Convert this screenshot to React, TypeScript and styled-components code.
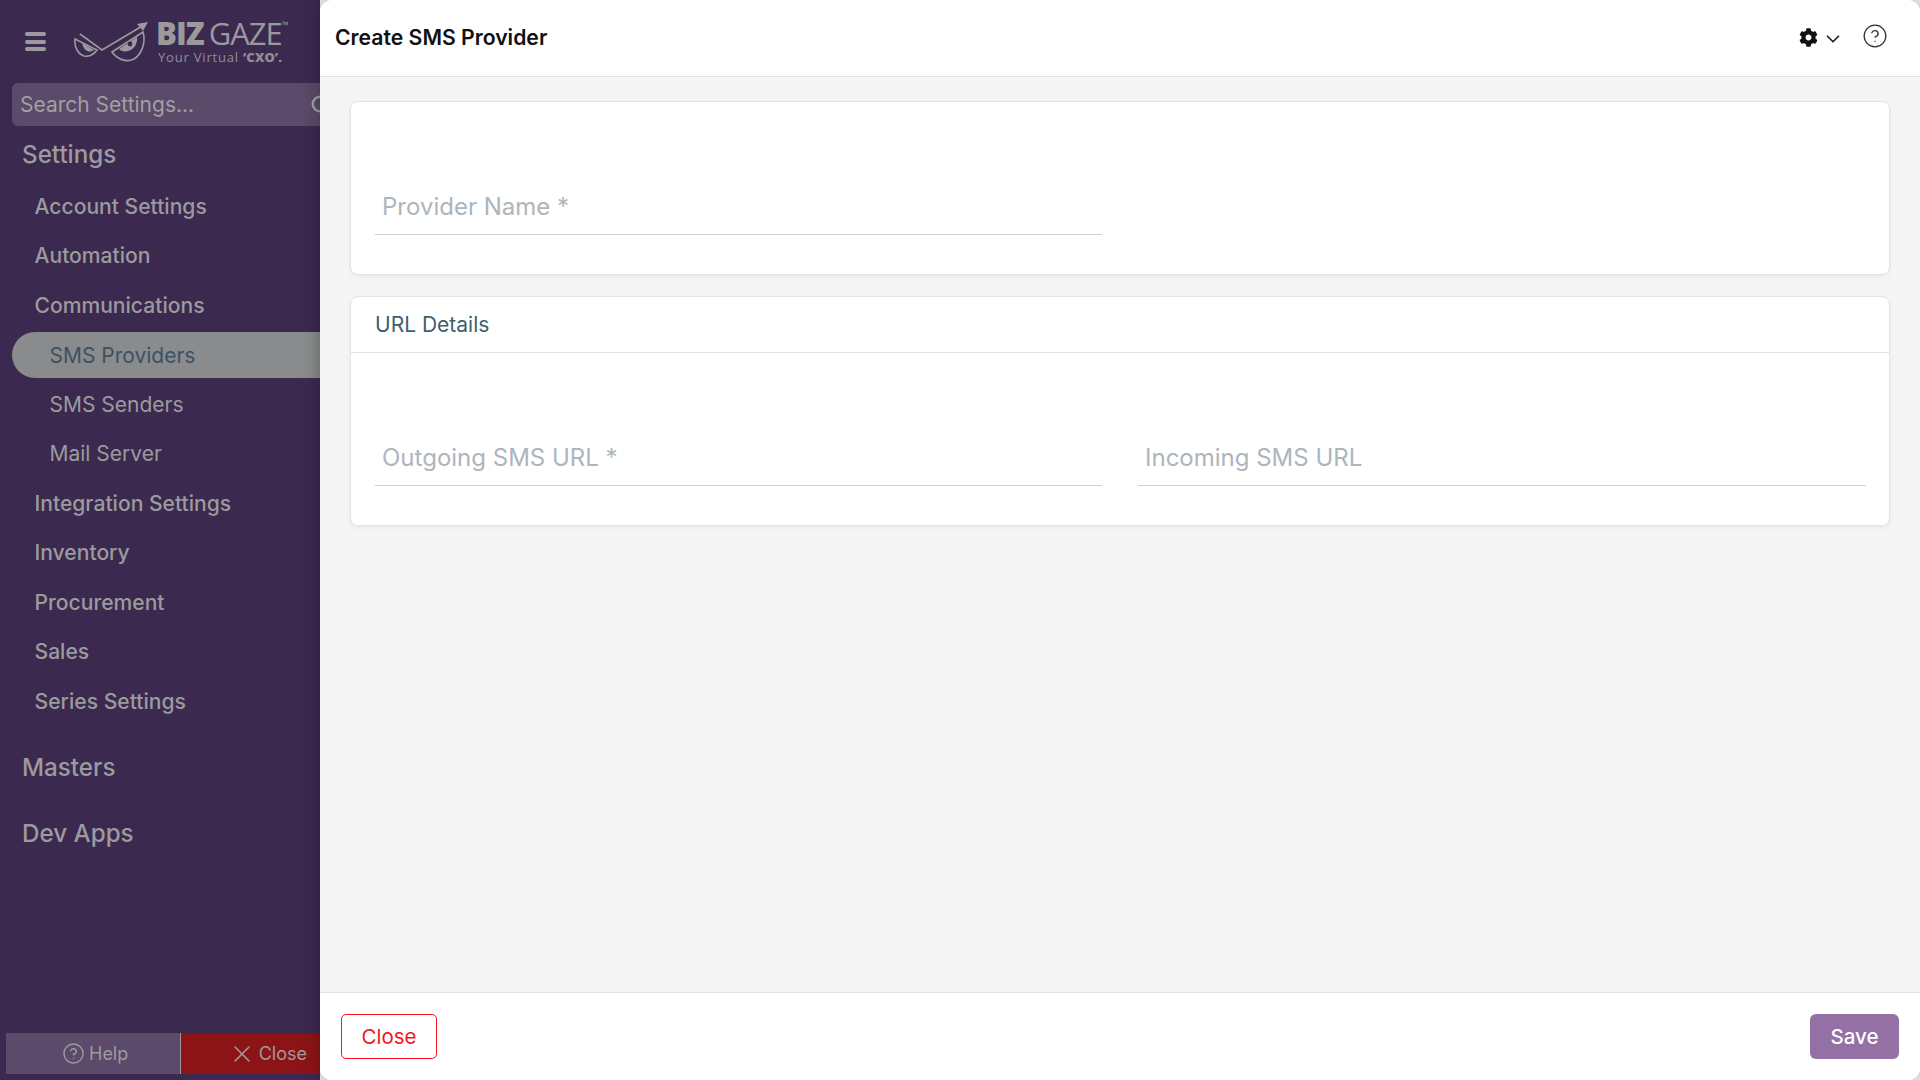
import React from 'react';
import styled, {createGlobalStyle} from "styled-components";
import {FaCog} from "react-icons/fa";
import {ChevronDown, CircleHelp, Search, X} from "lucide-react";

const GlobalStyle = createGlobalStyle`
  html, body {
    margin: 0;
    padding: 0;
    height: 100%;
    background: #f0f0f0;
  }
  * {
    box-sizing: border-box;
  }
`

const topItems = ['Account Settings', 'Automation', 'Communications']
const subItems = ['SMS Providers', 'SMS Senders', 'Mail Server']
const bottomItems = ['Integration Settings', 'Inventory', 'Procurement', 'Sales', 'Series Settings']

const Logo = () => (
    <LogoWrap>
        <svg width="76" height="42" viewBox="0 0 76 42" fill="none" stroke="#9a9a9c" strokeWidth="1.6">
            <path d="M1 17 L23 28 C20 33 14 35 10 34 C4 32 0 25 1 17 Z"/>
            <path d="M8 21 L20 28 C16 31 10 30 8 21 Z" fill="#9a9a9c" stroke="none"/>
            <path d="M6 12 L28 28 L70 3"/>
            <path d="M63 2 L74 0 L69 9 Z" fill="#9a9a9c" stroke="none"/>
            <path d="M38 30 L69 10 C72 20 68 32 60 37 C52 41 43 37 38 30 Z"/>
            <path d="M45 27 L63 15 C64 21 60 28 54 29 C50 30 47 29 45 27 Z" fill="#9a9a9c" stroke="none"/>
            <circle cx="56" cy="22" r="2.4" fill="#3c2950" stroke="none"/>
        </svg>
        <LogoText>
            <LogoName><b>BIZ</b><span>GAZE</span><sup>™</sup></LogoName>
            <LogoTag>Your Virtual <b>‘CXO’.</b></LogoTag>
        </LogoText>
    </LogoWrap>
)

const App = () => {
    return (
        <Page>
            <GlobalStyle/>
            <Sidebar>
                <Brand>
                    <Burger><i/><i/><i/></Burger>
                    <Logo/>
                </Brand>
                <SearchBox>
                    <SearchText>Search Settings...</SearchText>
                    <SearchIcon size={22} strokeWidth={2.6}/>
                </SearchBox>
                <SectionTitle $gap={6}>Settings</SectionTitle>
                <MenuList>
                    {topItems.map(item => <MenuItem key={item}>{item}</MenuItem>)}
                    {subItems.map((item, i) => <SubItem key={item} $active={i === 0}>{item}</SubItem>)}
                    {bottomItems.map(item => <MenuItem key={item}>{item}</MenuItem>)}
                </MenuList>
                <SectionTitle $gap={19}>Masters</SectionTitle>
                <SectionTitle $gap={20}>Dev Apps</SectionTitle>
                <SideFooter>
                    <HelpButton><CircleHelp size={23} strokeWidth={1.5}/>Help</HelpButton>
                    <CloseSide><CloseIcon size={28} strokeWidth={1.3}/>Close</CloseSide>
                </SideFooter>
            </Sidebar>
            <Main>
                <Header>
                    <Title>Create SMS Provider</Title>
                    <HeaderIcons>
                        <GearGroup>
                            <FaCog size={19} color="#111"/>
                            <ChevronDown size={22} strokeWidth={1.9} color="#222"/>
                        </GearGroup>
                        <CircleHelp size={26} strokeWidth={1.2} color="#333"/>
                    </HeaderIcons>
                </Header>
                <Content>
                    <Card>
                        <CardBody>
                            <Field>Provider Name *</Field>
                            <div/>
                        </CardBody>
                    </Card>
                    <Card>
                        <CardHeader>URL Details</CardHeader>
                        <CardBody>
                            <Field>Outgoing SMS URL *</Field>
                            <Field>Incoming SMS URL</Field>
                        </CardBody>
                    </Card>
                </Content>
                <Footer>
                    <CloseButton>Close</CloseButton>
                    <SaveButton>Save</SaveButton>
                </Footer>
            </Main>
        </Page>
    );
};

export default App;


const Page = styled.div`
  display: flex;
  width: 1920px;
  height: 1080px;
  overflow: hidden;
  background: #f0f0f0;
  font-family: Inter, "Liberation Sans", sans-serif;
`

const Sidebar = styled.aside`
  width: 320px;
  flex: none;
  display: flex;
  flex-direction: column;
  overflow: hidden;
  background: #3c2950;
  color: #9b9b9d;
`

const Brand = styled.div`
  display: flex;
  align-items: flex-start;
  height: 83px;
  padding: 22px 0 0 25px;
`

const Burger = styled.div`
  display: flex;
  flex-direction: column;
  gap: 3.5px;
  width: 21px;
  margin-top: 10px;

  i {
    display: block;
    height: 4px;
    border-radius: 2px;
    background: #9b9b9d;
  }
`

const LogoWrap = styled.div`
  display: flex;
  align-items: flex-start;
  margin-left: 28px;
`

const LogoText = styled.div`
  display: flex;
  flex-direction: column;
  margin-left: 6px;
  margin-top: -4px;
`

const LogoName = styled.div`
  display: flex;
  font-family: "Open Sans", sans-serif;
  font-size: 31px;
  line-height: 31px;
  letter-spacing: -1px;
  color: #9a9a9c;

  b {
    font-weight: 800;
    margin-right: 5px;
  }

  span {
    font-weight: 400;
  }

  sup {
    font-size: 9px;
    line-height: 14px;
    margin: 0;
    letter-spacing: 0;
    font-weight: 700;
  }
`

const LogoTag = styled.div`
  padding-left: 2px;
  font-family: "Open Sans", sans-serif;
  font-size: 13px;
  line-height: 16px;
  letter-spacing: 0.8px;
  color: #8f8f92;

  b {
    font-weight: 800;
    letter-spacing: 0.1px;
  }
`

const SearchBox = styled.div`
  display: flex;
  align-items: center;
  justify-content: space-between;
  flex: none;
  width: 330px;
  height: 43px;
  margin-left: 12px;
  padding: 0 0 0 8px;
  border-radius: 6px;
  background: #5b4a69;
`

const SearchText = styled.span`
  font-size: 21px;
  color: #a0a0a2;
`

const SearchIcon = styled(Search)`
  margin-right: 10px;
  color: #a0a0a2;
`

const SectionTitle = styled.div<{ $gap: number }>`
  padding-left: 22px;
  margin-top: ${props => props.$gap}px;
  font-size: 24.2px;
  line-height: 46px;
  font-weight: 500;
  color: #9b9b9d;
`

const MenuList = styled.div`
  display: flex;
  flex-direction: column;
  margin-top: 3.5px;
`

const MenuItem = styled.div`
  height: 49.5px;
  display: flex;
  align-items: center;
  padding-left: 34.5px;
  font-size: 21.1px;
  font-weight: 500;
  color: #9b9b9d;
`

const SubItem = styled.div<{ $active?: boolean }>`
  height: ${props => props.$active ? '46px' : '49.5px'};
  margin: ${props => props.$active ? '2px 0 1.5px 12px' : '0 0 0 12px'};
  display: flex;
  align-items: center;
  padding-left: 37.5px;
  font-size: 21px;
  border-radius: 23px 0 0 23px;
  color: ${props => props.$active ? '#3d5163' : '#9b9b9d'};
  background: ${props => props.$active ? '#8a8b8c' : 'transparent'};
`

const SideFooter = styled.div`
  display: flex;
  margin: auto 0 6px 6px;
  height: 41px;
`

const HelpButton = styled.div`
  width: 175px;
  flex: none;
  display: flex;
  align-items: center;
  gap: 4px;
  padding-left: 56px;
  font-size: 18px;
  color: #9b9b9d;
  background: #5b4a69;
  border-right: 1px solid #9b9b9d;
`

const CloseSide = styled.div`
  flex: 1;
  display: flex;
  align-items: center;
  justify-content: flex-end;
  gap: 3px;
  padding-right: 13px;
  font-size: 18px;
  color: #a09a9a;
  background: #8d1416;
`

const CloseIcon = styled(X)`
  color: #a09a9a;
`

const Main = styled.main`
  flex: 1;
  min-width: 0;
  position: relative;
  display: flex;
  flex-direction: column;
  overflow: hidden;
  border-radius: 12px;
  background: #f5f5f5;
  box-shadow: 0 0 18px rgba(0, 0, 0, 0.3);
`

const Header = styled.header`
  height: 77px;
  flex: none;
  display: flex;
  align-items: center;
  justify-content: space-between;
  padding: 0 32px 0 15px;
  background: #fff;
  border-bottom: 1px solid #dfe1e6;
`

const Title = styled.h1`
  margin: 0 0 2px;
  font-size: 21.2px;
  font-weight: 600;
  color: #111;
`

const HeaderIcons = styled.div`
  display: flex;
  align-items: center;
  gap: 18px;
  margin-bottom: 5px;
`

const GearGroup = styled.div`
  display: flex;
  align-items: center;
  gap: 4px;
  margin-top: 3px;

  svg:last-child {
    margin-top: 3px;
  }
`

const Content = styled.div`
  flex: 1;
  display: flex;
  flex-direction: column;
  gap: 21px;
  padding: 24px 30px 0;
`

const Card = styled.section`
  background: #fff;
  border: 1px solid #e2e4ea;
  border-radius: 8px;
  box-shadow: 0 2px 5px rgba(0, 0, 0, 0.05);
`

const CardHeader = styled.div`
  height: 56px;
  display: flex;
  align-items: center;
  padding-left: 24px;
  font-size: 21px;
  color: #3f5f6f;
  border-bottom: 1px solid #dfe1e8;
`

const CardBody = styled.div`
  display: grid;
  grid-template-columns: 727px 728px;
  column-gap: 36px;
  padding: 57px 24px 39px;
`

const Field = styled.div`
  height: 76px;
  display: flex;
  align-items: flex-end;
  padding: 0 7px 4px;
  font-size: 24px;
  line-height: 46px;
  color: #adb5bd;
  border-bottom: 1px solid #ced0d6;
`

const Footer = styled.footer`
  height: 88px;
  flex: none;
  display: flex;
  align-items: center;
  justify-content: space-between;
  padding: 0 21px;
  background: #fff;
  border-top: 1px solid #dfe1e6;
`

const CloseButton = styled.button`
  width: 96px;
  height: 45px;
  font: 400 20.5px Inter, sans-serif;
  color: #f5141e;
  background: #fff;
  border: 1px solid #f5141e;
  border-radius: 5px;
`

const SaveButton = styled.button`
  width: 89px;
  height: 45px;
  font: 500 20.5px Inter, sans-serif;
  color: #fff;
  background: #9470a5;
  border: 0;
  border-radius: 6px;
`
